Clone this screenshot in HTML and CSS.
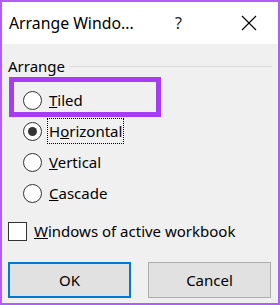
FILE: index.html
```html
<!DOCTYPE html>
<html lang="en">
<head>
    <meta charset="UTF-8">
    <title>Arrange Windows</title>
    <link rel="stylesheet" href="styles.css">
</head>
<body>
    <div class="window">
        <div class="titlebar">
            <span class="title">Arrange Windo...</span>
            <span class="help">?</span>
            <svg class="close" width="16" height="16" viewBox="0 0 16 16">
                <path d="M1 1 L15 15 M15 1 L1 15" stroke="#000" stroke-width="1.1" fill="none"/>
            </svg>
        </div>
        <div class="content">
            <div class="group-head">
                <span>Arrange</span>
                <span class="rule"></span>
            </div>
            <div class="options">
                <label class="option"><span class="radio"></span><span class="text"><u>T</u>iled</span></label>
                <label class="option"><span class="radio checked"></span><span class="text focused">H<u>o</u>rizontal</span></label>
                <label class="option"><span class="radio"></span><span class="text"><u>V</u>ertical</span></label>
                <label class="option"><span class="radio"></span><span class="text"><u>C</u>ascade</span></label>
                <div class="highlight"></div>
            </div>
            <label class="check-row"><span class="checkbox"></span><span><u>W</u>indows of active workbook</span></label>
            <div class="buttons">
                <button class="btn default">OK</button>
                <button class="btn">Cancel</button>
            </div>
        </div>
    </div>
</body>
</html>
```

FILE: styles.css
```css
body {
    margin: 0;
    font-family: "Noto Sans", "Open Sans", sans-serif;
    color: #000;
}
.window {
    width: 280px;
    height: 305px;
    box-sizing: border-box;
    border: 2px solid #b45cf8;
    display: flex;
    flex-direction: column;
}
.titlebar {
    height: 42px;
    background: #fff;
    display: flex;
    align-items: center;
    flex-shrink: 0;
}
.title {
    font-size: 15.8px;
    margin-left: 7px;
    width: 166px;
    color: #000;
}
.help {
    font-size: 16px;
    color: #222;
}
.close {
    margin-left: 59px;
}
.content {
    flex: 1;
    background: #f0f0f0;
    padding: 12px 6px 0 6px;
    font-size: 15px;
}
.group-head {
    display: flex;
    align-items: center;
    gap: 4px;
    height: 20px;
}
.rule {
    flex: 1;
    height: 1px;
    background: #dcdcdc;
    margin-top: 1px;
}
.options {
    position: relative;
    padding: 14px 0 0 15px;
    display: flex;
    flex-direction: column;
    gap: 11px;
}
.option {
    display: flex;
    align-items: center;
    height: 20px;
}
.radio {
    width: 19px;
    height: 19px;
    border: 1px solid #333;
    border-radius: 50%;
    background: #fff;
    box-sizing: border-box;
    margin-right: 5px;
    display: flex;
    align-items: center;
    justify-content: center;
}
.radio.checked::after {
    content: "";
    width: 9px;
    height: 9px;
    border-radius: 50%;
    background: #333;
}
.text {
    padding: 0 1px;
    border: 1px dotted transparent;
    line-height: 24px;
}
.text.focused {
    border-color: #000;
}
.highlight {
    position: absolute;
    left: 1px;
    top: 1px;
    width: 142px;
    height: 30px;
    border: 5px solid #a83cf6;
}
.check-row {
    display: flex;
    align-items: center;
    margin-top: 18px;
    gap: 7px;
}
.checkbox {
    width: 19px;
    height: 19px;
    box-sizing: border-box;
    border: 1px solid #333;
    background: #fff;
}
.buttons {
    display: flex;
    justify-content: space-between;
    margin-top: 21px;
    padding-right: 1px;
}
.btn {
    width: 123px;
    height: 36px;
    box-sizing: border-box;
    font-family: inherit;
    font-size: 15px;
    background: #e1e1e1;
    border: 1px solid #adadad;
    padding: 0;
    color: #000;
}
.btn.default {
    border: 2px solid #0078d7;
}
```
